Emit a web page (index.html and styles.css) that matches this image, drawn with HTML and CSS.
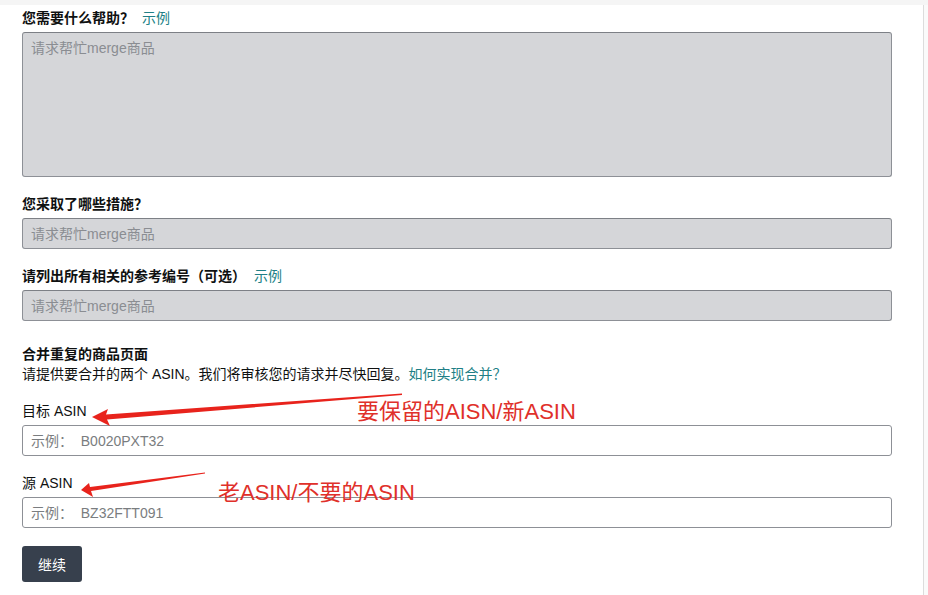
FILE: index.html
```html
<!DOCTYPE html>
<html lang="zh-CN">
<head>
  <meta charset="UTF-8" />
  <meta name="viewport" content="width=device-width, initial-scale=1.0" />
  <title>合并重复的商品页面</title>
  <link rel="stylesheet" href="styles.css">
</head>
<body>
  <div class="top-strip"></div>
  <div class="page">
    <form class="case-form">
      <div class="field">
        <label class="field-label">您需要什么帮助？ <a href="#" class="link">示例</a></label>
        <textarea class="input disabled tall" placeholder="请求帮忙merge商品" disabled></textarea>
      </div>
      <div class="field">
        <label class="field-label">您采取了哪些措施？</label>
        <input class="input disabled" placeholder="请求帮忙merge商品" disabled>
      </div>
      <div class="field">
        <label class="field-label">请列出所有相关的参考编号（可选） <a href="#" class="link">示例</a></label>
        <input class="input disabled" placeholder="请求帮忙merge商品" disabled>
      </div>

      <div class="section">
        <h3 class="section-title">合并重复的商品页面</h3>
        <p class="section-desc">请提供要合并的两个 ASIN。我们将审核您的请求并尽快回复。<a href="#" class="link">如何实现合并？</a></p>
      </div>

      <div class="field">
        <label class="field-label plain">目标 ASIN</label>
        <input class="input" placeholder="示例：  B0020PXT32">
      </div>
      <div class="field">
        <label class="field-label plain">源 ASIN</label>
        <input class="input" placeholder="示例：  BZ32FTT091">
      </div>
      <button type="button" class="btn">继续</button>
    </form>

    <!-- screenshot annotations -->
    <svg class="marks" viewBox="0 0 924 595" aria-hidden="true">
      <polygon points="92,417 108,409 106,414.5 402,393.5 402,395 107,419.5 110,426" />
      <polygon points="81,490 89,483 90,487 205,472.5 205,473.5 91,491 93,497" />
    </svg>
    <span class="note note-target">要保留的AISN/新ASIN</span>
    <span class="note note-source">老ASIN/不要的ASIN</span>
  </div>
</body>
</html>
```

FILE: styles.css
```css
:root {
  --text: #0f1111;
  --link: #207f86;
  --field-bg: #d5d6d9;
  --border: #8d9096;
  --placeholder: #7a7d80;
  --btn: #37404d;
  --note: #e0302a;
}
* { box-sizing: border-box; margin: 0; padding: 0; }
html, body { height: 100%; overflow: hidden; }
body {
  font-family: "Liberation Sans", "Noto Sans CJK SC", sans-serif;
  font-size: 14px;
  color: var(--text);
  background: #fafafa;
}
.top-strip { height: 5px; background: #f5f5f5; }
.page {
  position: relative;
  width: 924px;
  height: 590px;
  background: #fff;
  border-right: 1px solid #dcdcdc;
}
.case-form {
  width: 892px;
  padding: 4px 0 0 22px;
}
.field { margin-bottom: 18px; }
.field-label {
  display: block;
  font-weight: bold;
  line-height: 18px;
  margin-bottom: 5px;
}
.field-label.plain { font-weight: normal; }
.field-label .link { font-weight: normal; margin-left: 4px; }
.link { color: var(--link); text-decoration: none; }
.input {
  display: block;
  width: 100%;
  height: 31px;
  padding: 0 8px;
  border: 1px solid var(--border);
  border-radius: 3px;
  background: #fff;
  font-family: inherit;
  font-size: 14px;
  color: var(--text);
  outline: none;
}
.input::placeholder { color: var(--placeholder); }
.input.disabled { background: var(--field-bg); border-top-color: #7d8086; }
.input.disabled::placeholder { color: #8a8d92; }
.input.tall {
  height: 145px;
  padding: 6px 8px;
  resize: none;
  line-height: 18px;
}
.section { margin: 23px 0 18px; }
.section-title { font-size: 14px; font-weight: bold; line-height: 20px; }
.section-desc { line-height: 20px; }
.btn {
  display: block;
  width: 60px;
  height: 36px;
  margin-top: 17px;
  border: none;
  border-radius: 3px;
  background: var(--btn);
  color: #fff;
  font-family: inherit;
  font-size: 14px;
  cursor: pointer;
}
.marks {
  position: absolute;
  left: 0;
  top: -5px;
  width: 924px;
  height: 595px;
  pointer-events: none;
}
.marks polygon { fill: #e8231c; }
.note {
  position: absolute;
  font-family: "Liberation Sans", "Noto Sans CJK SC", sans-serif;
  font-size: 22px;
  line-height: 26px;
  color: var(--note);
  white-space: nowrap;
}
.note-target { left: 357px; top: 394px; }
.note-source { left: 218px; top: 475px; }
```
